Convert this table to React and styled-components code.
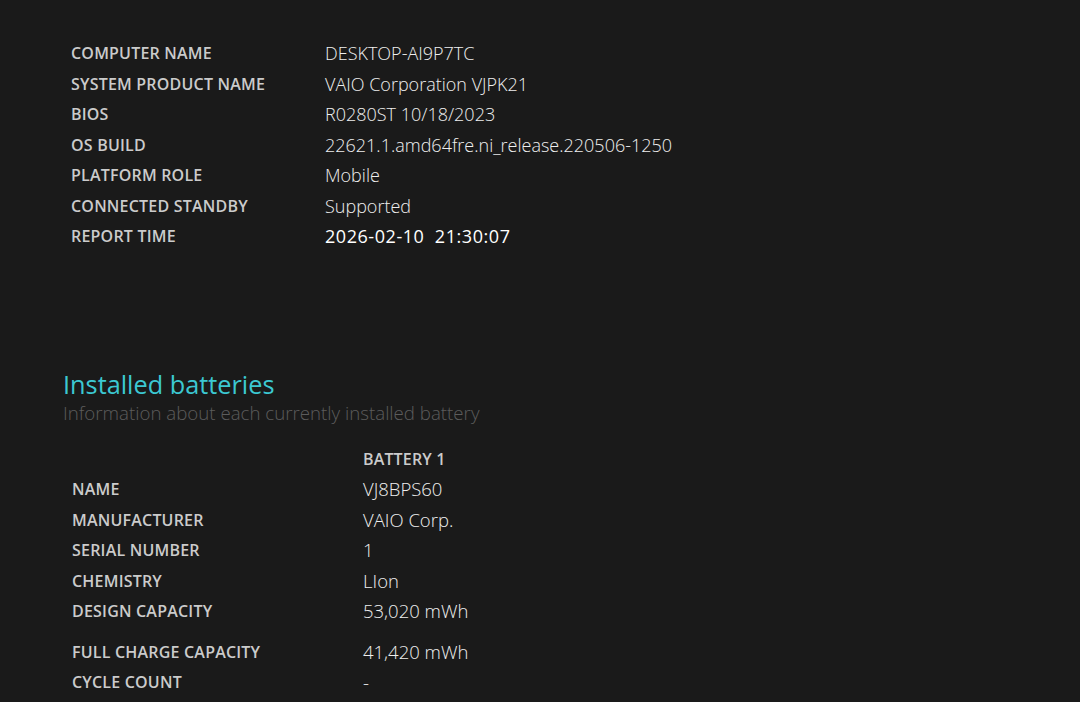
import React from 'react';
import styled, { createGlobalStyle } from 'styled-components';

const GlobalStyle = createGlobalStyle`
  html, body {
    margin: 0;
    padding: 0;
    background: #1a1a1a;
  }
  body {
    font-family: "Open Sans", "Noto Sans", "Liberation Sans", sans-serif;
    color: #e8e8e8;
  }
`;

const systemInfo = [
  ['COMPUTER NAME', 'DESKTOP-AI9P7TC'],
  ['SYSTEM PRODUCT NAME', 'VAIO Corporation VJPK21'],
  ['BIOS', 'R0280ST 10/18/2023'],
  ['OS BUILD', '22621.1.amd64fre.ni_release.220506-1250'],
  ['PLATFORM ROLE', 'Mobile'],
  ['CONNECTED STANDBY', 'Supported'],
];

const batteryInfo = [
  ['NAME', 'VJ8BPS60'],
  ['MANUFACTURER', 'VAIO Corp.'],
  ['SERIAL NUMBER', '1'],
  ['CHEMISTRY', 'LIon'],
  ['DESIGN CAPACITY', '53,020 mWh', true],
  ['FULL CHARGE CAPACITY', '41,420 mWh'],
  ['CYCLE COUNT', '-'],
];

const App = () => (
  <Page>
    <GlobalStyle />
    <InfoTable $labelWidth={254} $indent={8}>
      {systemInfo.map(([label, value]) => (
        <Row key={label}>
          <Label>{label}</Label>
          <Value>{value}</Value>
        </Row>
      ))}
      <Row>
        <Label>REPORT TIME</Label>
        <Value $strong>2026-02-10&nbsp;&nbsp;21:30:07</Value>
      </Row>
    </InfoTable>

    <Section>
      <Heading>Installed batteries</Heading>
      <Subheading>Information about each currently installed battery</Subheading>
    </Section>

    <InfoTable $labelWidth={291} $indent={9}>
      <Row>
        <Label />
        <ColumnHead>BATTERY 1</ColumnHead>
      </Row>
      {batteryInfo.map(([label, value, spaced]) => (
        <Row key={label} $spaced={spaced}>
          <Label>{label}</Label>
          <Value $size={18.5}>{value}</Value>
        </Row>
      ))}
    </InfoTable>
  </Page>
);

const Page = styled.div`
  padding: 38px 0 0 63px;
  min-height: 100vh;
  box-sizing: border-box;
  background: #1a1a1a;
`;

const InfoTable = styled.div`
  display: grid;
  grid-template-columns: ${(p) => p.$labelWidth}px auto;
  justify-content: start;
  padding-left: ${(p) => p.$indent}px;
`;

const Row = styled.div`
  display: contents;

  & > * {
    height: 30.5px;
    padding-bottom: ${(p) => (p.$spaced ? '10px' : '0')};
  }
`;

const Label = styled.div`
  font-size: 16px;
  font-weight: 600;
  color: #cbcbcb;
  line-height: 31px;
  white-space: nowrap;
  letter-spacing: 0.2px;
`;

const Value = styled.div`
  font-size: ${(p) => p.$size || 18}px;
  font-weight: ${(p) => (p.$strong ? 400 : 300)};
  color: ${(p) => (p.$strong ? '#ffffff' : '#efefef')};
  letter-spacing: ${(p) => (p.$strong ? '0.55px' : '0')};
  line-height: 30px;
  white-space: nowrap;
`;

const ColumnHead = styled.div`
  font-size: 16px;
  font-weight: 600;
  color: #cbcbcb;
  line-height: 30px;
  letter-spacing: 0.15px;
`;

const Section = styled.div`
  margin-top: 117px;
  margin-bottom: 18px;
`;

const Heading = styled.h2`
  margin: 0;
  font-size: 25.3px;
  font-weight: 400;
  color: #3cc8d2;
  line-height: 30px;
`;

const Subheading = styled.div`
  font-size: 18.7px;
  font-weight: 300;
  color: #5c5c5c;
  line-height: 27px;
`;

export default App;
